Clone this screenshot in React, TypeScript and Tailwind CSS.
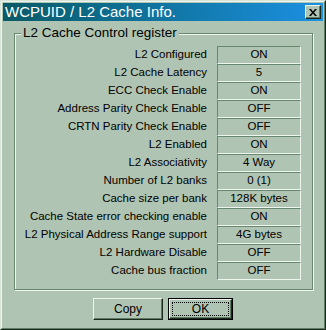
import React from "react";

const rows: [string, string][] = [
  ["L2 Configured", "ON"],
  ["L2 Cache Latency", "5"],
  ["ECC Check Enable", "ON"],
  ["Address Parity Check Enable", "OFF"],
  ["CRTN Parity Check Enable", "OFF"],
  ["L2 Enabled", "ON"],
  ["L2 Associativity", "4 Way"],
  ["Number of L2 banks", "0 (1)"],
  ["Cache size per bank", "128K bytes"],
  ["Cache State error checking enable", "ON"],
  ["L2 Physical Address Range support", "4G bytes"],
  ["L2 Hardware Disable", "OFF"],
  ["Cache bus fraction", "OFF"],
];

export default function App() {
  return (
    <div
      className="w-[326px] h-[330px] bg-[#b0c4b3] border border-t-[#d8e4d8] border-l-[#d8e4d8] border-b-[#1c2a1e] border-r-[#1c2a1e] text-black"
      style={{ fontFamily: '"Liberation Sans", Arial, sans-serif' }}
    >
      <div className="h-full border border-t-[#eef5ee] border-l-[#eef5ee] border-b-[#5e7b63] border-r-[#5e7b63] p-px flex flex-col">
        {/* Title bar */}
        <div className="h-[18px] flex items-center justify-between bg-gradient-to-r from-[#0a5a66] to-[#1c90e2] pl-[2px] pr-[2px]">
          <span className="text-white text-[15px] leading-[18px] whitespace-nowrap">
            WCPUID / L2 Cache Info.
          </span>
          <div className="w-[16px] h-[14px] bg-[#b0c4b3] border border-t-[#eef5ee] border-l-[#eef5ee] border-b-[#1c2a1e] border-r-[#1c2a1e] flex items-center justify-center shadow-[inset_-1px_-1px_0_#5e7b63]">
            <svg width="8" height="7" viewBox="0 0 8 7">
              <path d="M0 0h2l2 2.5L6 0h2L5 3.5 8 7H6L4 4.5 2 7H0l3-3.5z" fill="#000" />
            </svg>
          </div>
        </div>

        {/* Group box */}
        <div className="relative mt-[12px] ml-[11px] mr-[10px] border border-[#6a876f] shadow-[inset_1px_1px_0_#eef5ee,1px_1px_0_#eef5ee] pt-[12px] pb-[9px] pr-[11px]">
          <span className="absolute left-[6px] top-[-9px] bg-[#b0c4b3] px-[2px] text-[13.5px] leading-[16px] whitespace-nowrap">
            L2 Cache Control register
          </span>
          <div className="grid grid-cols-[1fr_84px] gap-x-[10px]">
            {rows.map(([label, value]) => (
              <React.Fragment key={label}>
                <div className="h-[18px] flex items-center justify-end text-[11.5px] whitespace-nowrap">
                  {label}
                </div>
                <div className="h-[18px] flex items-center justify-center text-[11.5px] border border-t-[#6a876f] border-l-[#6a876f] border-b-[#eef5ee] border-r-[#eef5ee] whitespace-nowrap">
                  {value}
                </div>
              </React.Fragment>
            ))}
          </div>
        </div>

        {/* Buttons */}
        <div className="mt-[8px] flex justify-center gap-[5px]">
          <div className="w-[70px] h-[22px] border border-t-[#eef5ee] border-l-[#eef5ee] border-b-[#1c2a1e] border-r-[#1c2a1e] shadow-[inset_-1px_-1px_0_#5e7b63] flex items-center justify-center text-[12px]">
            Copy
          </div>
          <div className="w-[65px] h-[22px] border border-black">
            <div className="h-full border border-t-[#eef5ee] border-l-[#eef5ee] border-b-[#1c2a1e] border-r-[#1c2a1e] shadow-[inset_-1px_-1px_0_#5e7b63] p-[2px]">
              <div className="h-full border border-dotted border-black flex items-center justify-center text-[12px]">
                OK
              </div>
            </div>
          </div>
        </div>
      </div>
    </div>
  );
}
